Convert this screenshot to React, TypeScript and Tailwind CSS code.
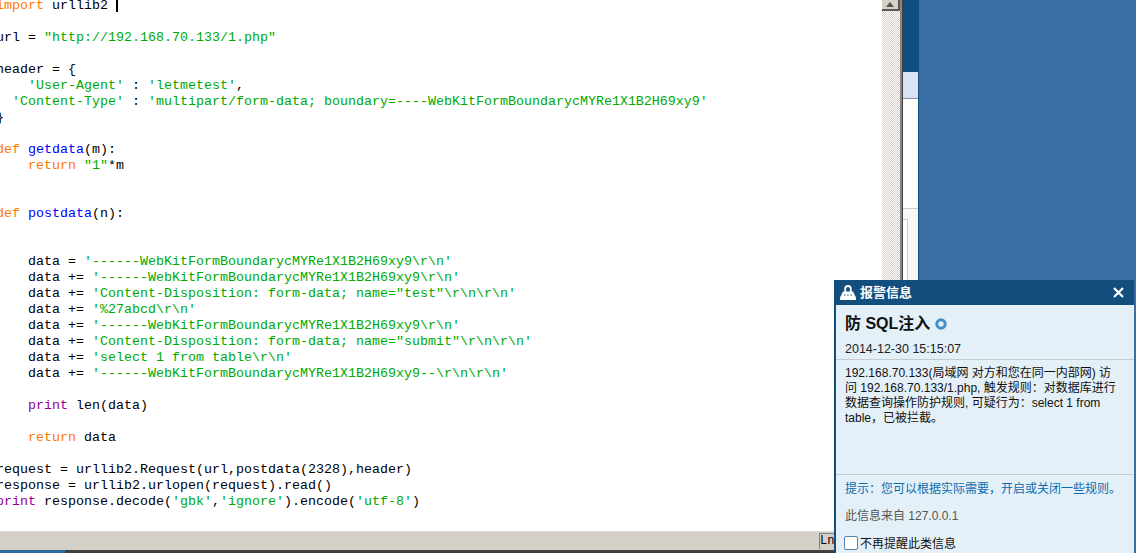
const K = "text-[#ff7700]";
const S = "text-[#00aa00]";
const D = "text-[#0000ff]";
const P = "text-[#900090]";

type Seg = [string, string?];

const code: Seg[][] = [
  [["import", K], [" urllib2 "]],
  [],
  [["url = "], ['"http://192.168.70.133/1.php"', S]],
  [],
  [["header = {"]],
  [["    "], ["'User-Agent'", S], [" : "], ["'letmetest'", S], [","]],
  [["  "], ["'Content-Type'", S], [" : "], ["'multipart/form-data; boundary=----WebKitFormBoundarycMYRe1X1B2H69xy9'", S]],
  [["}"]],
  [],
  [["def", K], [" "], ["getdata", D], ["(m):"]],
  [["    "], ["return", K], [" "], ['"1"', S], ["*m"]],
  [],
  [],
  [["def", K], [" "], ["postdata", D], ["(n):"]],
  [],
  [],
  [["    data = "], ["'------WebKitFormBoundarycMYRe1X1B2H69xy9\\r\\n'", S]],
  [["    data += "], ["'------WebKitFormBoundarycMYRe1X1B2H69xy9\\r\\n'", S]],
  [["    data += "], ["'Content-Disposition: form-data; name=\"test\"\\r\\n\\r\\n'", S]],
  [["    data += "], ["'%27abcd\\r\\n'", S]],
  [["    data += "], ["'------WebKitFormBoundarycMYRe1X1B2H69xy9\\r\\n'", S]],
  [["    data += "], ["'Content-Disposition: form-data; name=\"submit\"\\r\\n\\r\\n'", S]],
  [["    data += "], ["'select 1 from table\\r\\n'", S]],
  [["    data += "], ["'------WebKitFormBoundarycMYRe1X1B2H69xy9--\\r\\n\\r\\n'", S]],
  [],
  [["    "], ["print", P], [" len(data)"]],
  [],
  [["    "], ["return", K], [" data"]],
  [],
  [["request = urllib2.Request(url,postdata(2328),header)"]],
  [["response = urllib2.urlopen(request).read()"]],
  [["print", P], [" response.decode("], ["'gbk'", S], [","], ["'ignore'", S], [").encode("], ["'utf-8'", S], [")"]],
];

const Editor = () => (
  <div className="w-[882px] h-[531px] overflow-hidden bg-white">
    <div className="-ml-1 -mt-[2px] font-['Liberation_Mono',monospace] text-[13.333px] leading-4 text-black whitespace-pre">
      {code.map((line, i) => (
        <div key={i} className="h-4">
          {line.map(([text, color], j) => (
            <span key={j} className={color}>
              {text}
            </span>
          ))}
          {i === 0 && <span className="inline-block w-[2px] h-[12px] bg-black align-top mt-[2px]" />}
        </div>
      ))}
    </div>
  </div>
);

const Scrollbar = () => (
  <div className="w-[18px] h-[531px] bg-[repeating-conic-gradient(#d4d0c8_0_25%,#ffffff_0_50%)] bg-[length:2px_2px]">
    <div className="w-[18px] h-[11px] flex items-center justify-center bg-[#d4d0c8] border-r-2 border-b-2 border-[#5a5a5a]">
      <svg width="10" height="6" viewBox="0 0 10 6">
        <path d="M5 0L9 5H1Z" fill="#555555" />
      </svg>
    </div>
  </div>
);

const SideStrip = () => (
  <div className="w-[16px] h-[531px] flex flex-col border-r border-[#10507f] bg-[#f8f8f8]">
    <div className="h-[72px] bg-[#10507f]" />
    <div className="h-[27px] bg-[#d6e4f5] border-b border-[#8a8f96]" />
    <div className="h-[110px] bg-white border-b border-[#cccccc]" />
    <div className="mt-[10px] flex-1 w-[5px] bg-white border-r border-[#cccccc] border-t" />
  </div>
);

const LockIcon = () => (
  <svg width="16" height="15" viewBox="0 0 16 15">
    <path d="M5.2 7V3.8a2.8 2.8 0 0 1 5.6 0V7" fill="none" stroke="#ffffff" strokeWidth="1.8" />
    <path d="M3 6.5h10l3 6V15H0v-2.5Z" fill="#ffffff" />
    <path d="M4 10h1.5M7.2 10h1.5M10.4 10h1.5" stroke="#134f7e" strokeWidth="1" />
  </svg>
);

const Alert = () => (
  <div className="absolute left-[834px] top-[280px] w-[300px] h-[273px] flex flex-col bg-[#e4f0f7] border-l-2 border-[#134f7e] font-['Liberation_Sans','Noto_Sans_CJK_SC',sans-serif]">
    <div className="h-[25px] flex items-center bg-[#134f7e] text-white">
      <div className="ml-[4px] w-[16px]">
        <LockIcon />
      </div>
      <span className="ml-[4px] text-[13px] font-bold">报警信息</span>
      <svg className="ml-auto mr-[10px]" width="11" height="11" viewBox="0 0 11 11">
        <path d="M1 1L10 10M10 1L1 10" stroke="#ffffff" strokeWidth="2.2" />
      </svg>
    </div>
    <div className="h-[55px] border-b border-[#c4ccd2] pl-[9px] pt-[8px]">
      <div className="flex items-center h-[22px] text-[16px] font-bold text-[#111111]">
        防 SQL注入
        <svg className="ml-[5px]" width="12" height="12" viewBox="0 0 12 12">
          <circle cx="6" cy="6" r="4.2" fill="none" stroke="#428ec8" strokeWidth="3" />
        </svg>
      </div>
      <div className="mt-[7px] text-[12.5px] leading-[15px] text-[#222222]">2014-12-30 15:15:07</div>
    </div>
    <div className="h-[115px] border-b border-[#c4ccd2] pl-[9px] pt-[6px] text-[12px] leading-[15px] text-[#111111]">
      <div>192.168.70.133(局域网 对方和您在同一内部网) 访</div>
      <div>问 192.168.70.133/1.php, 触发规则：对数据库进行</div>
      <div>数据查询操作防护规则, 可疑行为：select 1 from</div>
      <div>table，已被拦截。</div>
    </div>
    <div className="pl-[9px] pt-[7px] text-[12px] leading-[15px] text-[#0a6cb0]">提示：您可以根据实际需要，开启或关闭一些规则。</div>
    <div className="pl-[9px] mt-[12px] text-[12px] leading-[15px] text-[#555555]">此信息来自 127.0.0.1</div>
    <div className="pl-[8px] mt-[13px] flex items-start gap-[2px] text-[12px] leading-[15px] text-[#111111]">
      <span className="w-[14px] h-[14px] -mt-[1px] rounded-[2px] bg-white border border-[#5a86a8]" />
      不再提醒此类信息
    </div>
  </div>
);

export default function App() {
  return (
    <div className="relative w-[1136px] h-[553px] overflow-hidden flex bg-[#3b6ea5]">
      <div className="w-[919px] flex flex-col">
        <div className="flex">
          <Editor />
          <Scrollbar />
          <div className="w-[3px] h-[531px] bg-[#8a8680] border-r border-[#404040]" />
          <SideStrip />
        </div>
        <div className="h-[19px] bg-[#d4d0c8] border-t border-[#e2dfd9] pl-[819px] pt-[1px]">
          <div className="w-[15px] h-[16px] overflow-hidden border-l border-t border-[#808080] font-['Liberation_Mono',monospace] text-[12px] leading-[15px] text-black">
            Ln
          </div>
        </div>
        <div className="h-[3px] bg-[#404040]">
          <div className="w-[65px] h-[3px] bg-[#2c6ca0]" />
        </div>
      </div>
      <Alert />
    </div>
  );
}
